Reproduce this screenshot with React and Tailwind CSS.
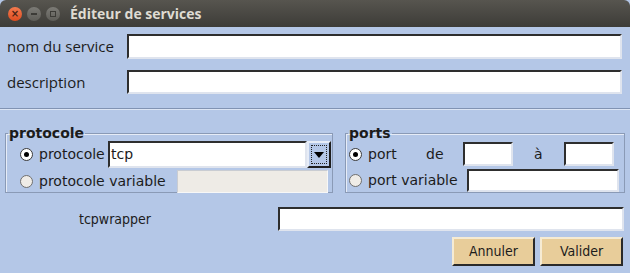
import React from 'react';

const entry = "bg-white border-2 border-t-[#2e2e2e] border-l-[#2e2e2e] border-b-[#dfe4ee] border-r-[#dfe4ee]";

const Radio = ({ checked }) => (
    <span className={`w-[13px] h-[13px] rounded-full border flex items-center justify-center shrink-0 ${checked ? 'bg-white border-[#3a3a3a]' : 'bg-[#efece7] border-[#6f6f6f]'}`}>
        {checked && <span className="w-[5px] h-[5px] rounded-full bg-black" />}
    </span>
);

const TitleBar = () => (
    <div className="h-[27px] rounded-t-[6px] bg-gradient-to-b from-[#57554f] to-[#3d3c38] flex items-center pl-[8px]">
        <span className="w-[14px] h-[14px] rounded-full bg-gradient-to-b from-[#f37a4e] to-[#dd4c1e] flex items-center justify-center text-[#4a2415] text-[10px] leading-none font-bold">×</span>
        <span className="ml-[5px] w-[14px] h-[14px] rounded-full bg-gradient-to-b from-[#7c7b76] to-[#5e5d58] flex items-center justify-center">
            <span className="w-[6px] h-[2px] bg-[#3c3b37]" />
        </span>
        <span className="ml-[5px] w-[14px] h-[14px] rounded-full bg-gradient-to-b from-[#7c7b76] to-[#5e5d58] flex items-center justify-center">
            <span className="w-[6px] h-[6px] border border-[#3c3b37]" />
        </span>
        <span className="ml-[10px] text-[#dfdbd2] font-bold text-[14px] font-['Open_Sans',sans-serif]">Éditeur de services</span>
    </div>
);

export default function App() {
    return (
        <div className="w-[630px] h-[273px] bg-[#b4c7e7] overflow-hidden text-[#1c1c1c] font-['DejaVu_Sans',sans-serif]">
            <TitleBar />
            <div className="pl-[7px] pr-[8px] pt-[7px] font-['Open_Sans',sans-serif] text-[15px]">
                <div className="flex items-center h-[25px]">
                    <span className="w-[120px]">nom du service</span>
                    <div className={`flex-1 h-[25px] ${entry}`} />
                </div>
                <div className="flex items-center h-[24px] mt-[11px]">
                    <span className="w-[120px]">description</span>
                    <div className={`flex-1 h-[24px] ${entry}`} />
                </div>
            </div>
            <div className="mt-[14px] h-[2px] border-t border-t-[#8193b3] border-b border-b-[#dce5f4]" />

            <div className="flex px-[5px] mt-[15px] gap-[12px] text-[14px]">
                <fieldset className="w-[328px] h-[68px] border border-[#8a9ab6] shadow-[inset_1px_1px_0_#e6ecf7]">
                    <legend className="ml-[2px] px-[1px] font-bold leading-[16px]">protocole</legend>
                    <div className="flex items-center h-[27px] pl-[14px]">
                        <Radio checked />
                        <span className="ml-[6px] w-[69px]">protocole</span>
                        <div className="w-[199px] h-[27px] bg-white border-2 border-t-[#2e2e2e] border-l-[#2e2e2e] border-b-[#dfe4ee] border-r-[#dfe4ee] flex items-center pl-[1px]">tcp</div>
                        <div className="w-[24px] h-[27px] border-2 border-t-[#e6ecf7] border-l-[#e6ecf7] border-b-[#1e1e1e] border-r-[#1e1e1e] bg-[#b4c7e7] p-[2px]">
                            <div className="w-full h-full border border-dotted border-[#222] flex items-center justify-center">
                                <svg width="10" height="6" viewBox="0 0 10 6"><path d="M0 0 L10 0 L5 6 Z" fill="#000" /></svg>
                            </div>
                        </div>
                    </div>
                    <div className="flex items-center h-[24px] mt-[1px] pl-[14px]">
                        <Radio />
                        <span className="ml-[6px] w-[138px]">protocole variable</span>
                        <div className="w-[151px] h-[23px] bg-[#eeebe6] border border-t-[#c9ccd2] border-l-[#c9ccd2] border-b-[#f7f7f7] border-r-[#f7f7f7]" />
                    </div>
                </fieldset>
                <fieldset className="w-[280px] h-[68px] border border-[#8a9ab6] shadow-[inset_1px_1px_0_#e6ecf7]">
                    <legend className="ml-[2px] px-[1px] font-bold leading-[16px]">ports</legend>
                    <div className="flex items-center h-[26px] pl-[3px]">
                        <Radio checked />
                        <span className="ml-[6px] w-[58px]">port</span>
                        <span className="w-[37px]">de</span>
                        <div className={`w-[50px] h-[24px] ${entry}`} />
                        <span className="w-[51px] pl-[21px]">à</span>
                        <div className={`w-[50px] h-[24px] ${entry}`} />
                    </div>
                    <div className="flex items-center h-[24px] mt-[1px] pl-[3px]">
                        <Radio />
                        <span className="ml-[6px] w-[99px]">port variable</span>
                        <div className={`w-[152px] h-[23px] ${entry}`} />
                    </div>
                </fieldset>
            </div>

            <div className="flex items-center mt-[14px] font-['DejaVu_Sans_Condensed','Open_Sans',sans-serif] text-[14px]">
                <span className="w-[230px] text-center">tcpwrapper</span>
                <div className={`ml-[48px] w-[346px] h-[24px] ${entry}`} />
            </div>
            <div className="flex justify-end gap-[5px] pr-[7px] mt-[6px] font-['DejaVu_Sans_Condensed','Open_Sans',sans-serif] text-[14px]">
                <button className="w-[83px] h-[29px] bg-[#e8cd9a] border-2 border-t-[#f6ebd3] border-l-[#f6ebd3] border-b-[#2a2a2a] border-r-[#2a2a2a]">Annuler</button>
                <button className="w-[83px] h-[29px] bg-[#e8cd9a] border-2 border-t-[#f6ebd3] border-l-[#f6ebd3] border-b-[#2a2a2a] border-r-[#2a2a2a]">Valider</button>
            </div>
        </div>
    );
}
